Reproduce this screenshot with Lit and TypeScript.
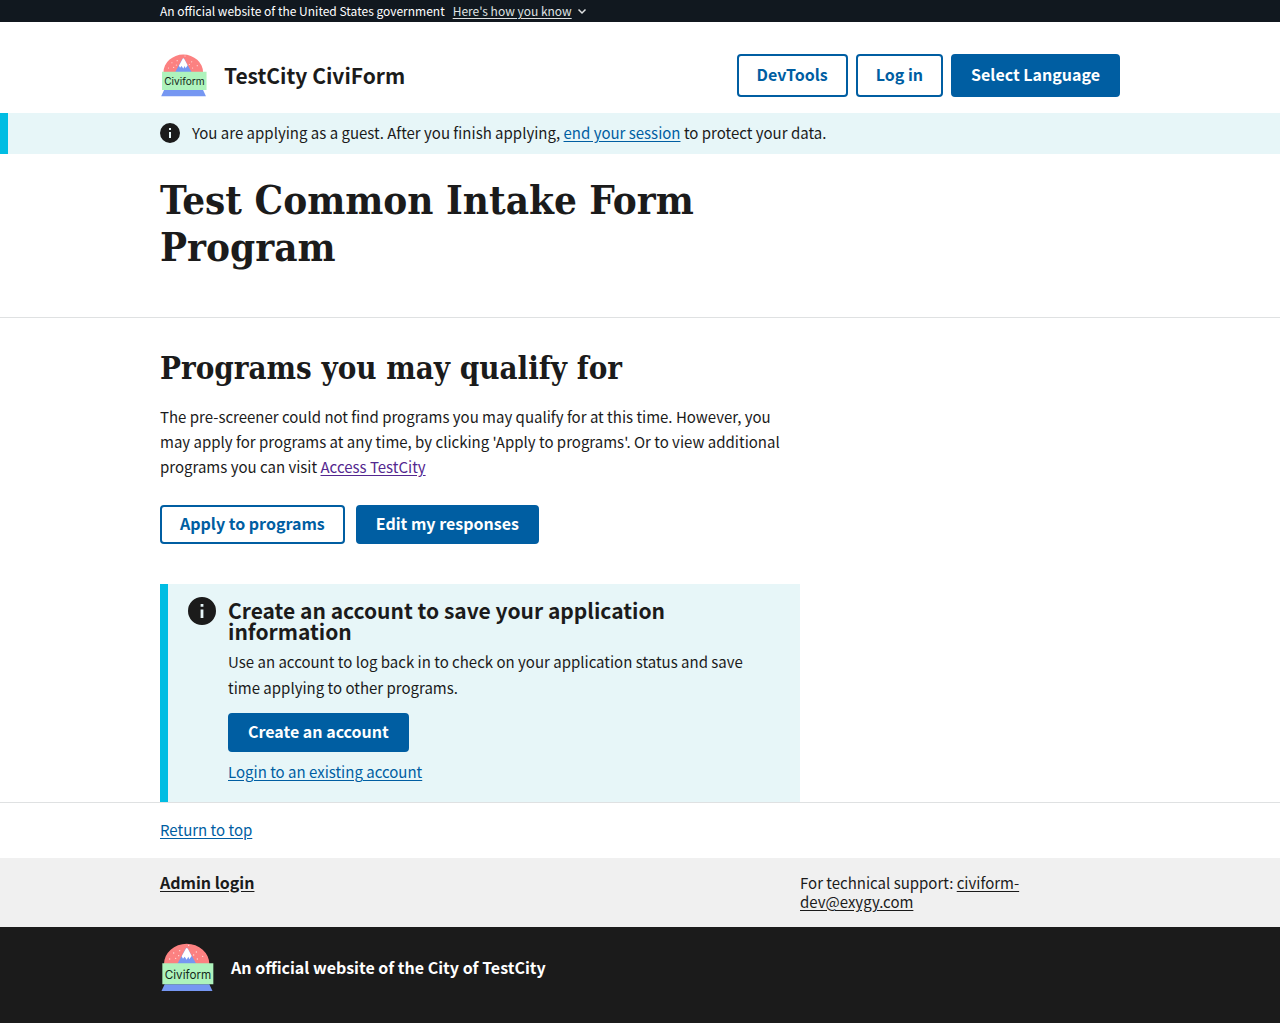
import { LitElement, html, css, svg } from "lit";
import { customElement, property } from "lit/decorators.js";

@customElement("civi-logo")
export class CiviLogo extends LitElement {
  static styles = css`
    :host { display: block; flex: none; }
    .logo { display: block; width: 100%; height: auto; }
    .word { font-family: Inter, "Liberation Sans", sans-serif; font-size: 35px; font-weight: 400; fill: #152a1b; }
  `;

  render() {
    const flakes = [[41, 38], [59, 31], [29, 56], [47, 54], [56, 46], [109, 35], [128, 48], [101, 44], [112, 56], [86, 15]];
    return html`
      <svg class="logo" viewBox="0 8 165 145" role="img" aria-label="Civiform logo">
        <path d="M12 71A68 61 0 0 1 148 71Z" fill="#fc8181" />
        ${flakes.map(([x, y]) => svg`<circle cx=${x} cy=${y} r="2" fill="#fff" opacity="0.75" />`)}
        <path d="M52 71L76 26Q80 19 84 26L109 71Z" fill="#7697f2" />
        <path d="M65 48L77 26Q80 20 84 26L95 47L88 57L85 49L80 58L74 49L69 55Z" fill="#fff" />
        <path d="M14 132H148L158 153H4Z" fill="#7697f2" />
        <path d="M7 69H160V132H7Z" fill="#aef3bc" />
        <text class="word" x="84" y="116" text-anchor="middle">Civiform</text>
      </svg>
    `;
  }
}

@customElement("info-icon")
export class InfoIcon extends LitElement {
  static styles = css`
    :host { display: block; flex: none; }
    .icon { display: block; width: 100%; height: auto; }
  `;

  render() {
    return html`
      <svg class="icon" viewBox="2 2 20 20" aria-hidden="true">
        <path fill="#1b1b1b" d="M12 2a10 10 0 1 0 0 20 10 10 0 0 0 0-20zm1 15h-2v-6h2v6zm0-8h-2V7h2v2z" />
      </svg>
    `;
  }
}

@customElement("app-root")
export class AppRoot extends LitElement {
  @property() city = "TestCity";

  static styles = css`
    :host {
      display: block;
      color: #1b1b1b;
      background: #fff;
      font-family: "Noto Sans CJK JP", "Noto Sans", sans-serif;
      font-size: 15px;
      line-height: 25px;
    }
    * { box-sizing: border-box; }
    h1, h2, h3, p { margin: 0; }
    a { color: #005ea2; text-underline-offset: 2px; }
    .container { max-width: 1024px; margin: 0 auto; padding: 0 32px; }

    .banner { background: #11181f; color: #fff; font-size: 12px; line-height: 22px; }
    .banner-row { display: flex; align-items: center; gap: 8px; }
    .banner-toggle {
      display: flex; align-items: center; gap: 4px; padding: 0; border: 0;
      background: none; color: #dfe1e2; font: inherit; cursor: pointer;
    }
    .banner-toggle span { text-decoration: underline; text-underline-offset: 2px; }
    .chevron { width: 12px; height: 12px; }

    .header { display: flex; align-items: center; justify-content: space-between; gap: 16px; padding-top: 32px; padding-bottom: 16px; }
    .brand { display: flex; align-items: center; gap: 16px; color: inherit; text-decoration: none; font-size: 21px; font-weight: 700; }
    .brand civi-logo { width: 48px; }
    .actions { display: flex; gap: 8px; }

    .button {
      display: inline-block; padding: 9px 18px 11px; border: 2px solid #005ea2; border-radius: 4px;
      background: #fff; color: #005ea2; font-family: inherit; font-size: 16px; font-weight: 700;
      line-height: 15px; cursor: pointer;
    }
    .header .button { line-height: 19px; }
    .primary { background: #005ea2; color: #fff; }

    .guest { background: #e7f6f8; box-shadow: inset 8px 0 #00bde3; }
    .guest-row { display: flex; align-items: center; gap: 12px; padding-top: 7px; padding-bottom: 9px; }
    .guest info-icon { width: 20px; }

    .title { border-bottom: 1px solid #dfe1e2; padding: 22px 0 47px; }
    .title h1, .results h2 { font-family: "DejaVu Serif Condensed", "DejaVu Serif", serif; font-weight: 700; }
    .title h1 { max-width: 640px; font-size: 40px; line-height: 47px; }
    .results { padding-top: 32px; border-bottom: 1px solid #dfe1e2; }
    .measure { max-width: 640px; }
    .results h2 { font-size: 31px; line-height: 36px; }
    .intro { padding-top: 18px; }
    .visited { color: #54278f; }
    .choices { display: flex; gap: 11px; padding: 26px 0 40px; }

    .account { display: flex; gap: 12px; border-left: 8px solid #00bde3; background: #e7f6f8; padding: 13px 32px 18px 20px; }
    .account info-icon { width: 28px; }
    .account h3 { padding-top: 3px; font-size: 21px; line-height: 21px; }
    .account p { padding: 7px 0 12px; line-height: 26px; }
    .account-login { display: block; margin-top: 7px; }

    .top { padding-top: 14px; padding-bottom: 16px; }
    .links { background: #f0f0f0; line-height: 19px; }
    .links-row { display: grid; grid-template-columns: 2fr 1fr; padding-top: 15px; padding-bottom: 16px; }
    .links a { color: #1b1b1b; }
    .links .admin { font-size: 16px; font-weight: 700; }
    .identifier { background: #1b1b1b; color: #fff; font-size: 16px; font-weight: 700; }
    .identifier-row { display: flex; align-items: center; gap: 16px; padding-top: 16px; padding-bottom: 32px; }
    .identifier civi-logo { width: 55px; }
  `;

  render() {
    return html`
      <section class="banner" aria-label="Official website of the United States government">
        <div class="container banner-row">
          <span>An official website of the United States government</span>
          <button class="banner-toggle" type="button" aria-expanded="false">
            <span>Here's how you know</span>
            <svg class="chevron" viewBox="0 0 12 12" fill="none" stroke="currentColor" stroke-width="1.5" aria-hidden="true">
              <path d="M2.5 4.5L6 8l3.5-3.5" />
            </svg>
          </button>
        </div>
      </section>
      <header class="container header">
        <a class="brand" href="#home"><civi-logo></civi-logo><span>${this.city} CiviForm</span></a>
        <nav class="actions" aria-label="Primary">
          <button class="button" type="button">DevTools</button>
          <button class="button" type="button">Log in</button>
          <button class="button primary" type="button">Select Language</button>
        </nav>
      </header>
      <section class="guest" aria-label="Guest session">
        <div class="container guest-row">
          <info-icon></info-icon>
          <p>You are applying as a guest. After you finish applying, <a href="#logout">end your session</a> to protect your data.</p>
        </div>
      </section>
      <main>
        <div class="title"><div class="container"><h1>Test Common Intake Form Program</h1></div></div>
        <div class="results">
          <div class="container">
            <div class="measure">
              <h2>Programs you may qualify for</h2>
              <p class="intro">
                The pre-screener could not find programs you may qualify for at this time. However, you may apply for
                programs at any time, by clicking 'Apply to programs'. Or to view additional programs you can visit
                <a class="visited" href="#access">${`Access ${this.city}`}</a>
              </p>
              <div class="choices">
                <button class="button" type="button">Apply to programs</button>
                <button class="button primary" type="button">Edit my responses</button>
              </div>
              <section class="account">
                <info-icon></info-icon>
                <div>
                  <h3>Create an account to save your application information</h3>
                  <p>Use an account to log back in to check on your application status and save time applying to other programs.</p>
                  <button class="button primary" type="button">Create an account</button>
                  <a class="account-login" href="#login">Login to an existing account</a>
                </div>
              </section>
            </div>
          </div>
        </div>
      </main>
      <footer>
        <div class="container top"><a href="#top">Return to top</a></div>
        <div class="links">
          <div class="container links-row">
            <div><a class="admin" href="#admin">Admin login</a></div>
            <div>For technical support: <a href="mailto:civiform-dev@exygy.com">civiform-dev@exygy.com</a></div>
          </div>
        </div>
        <div class="identifier">
          <div class="container identifier-row">
            <civi-logo></civi-logo>
            <span>An official website of the City of ${this.city}</span>
          </div>
        </div>
      </footer>
    `;
  }
}
